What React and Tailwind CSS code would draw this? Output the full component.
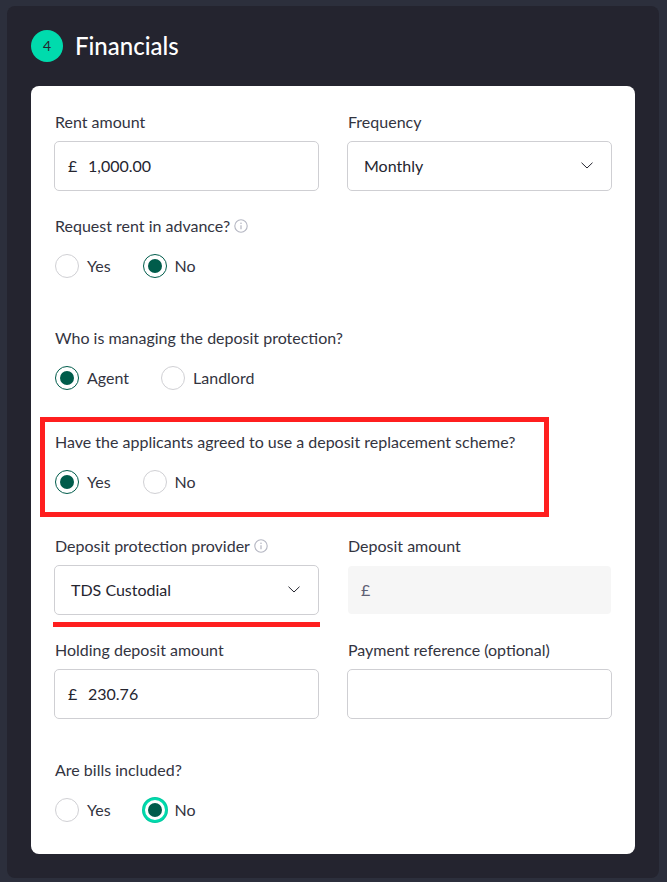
import React from "react";

function Info() {
  return (
    <svg width="14" height="14" viewBox="0 0 14 14" fill="none" className="shrink-0">
      <circle cx="7" cy="7" r="6.2" stroke="#b4b6c2" strokeWidth="1.1" />
      <circle cx="7" cy="4.2" r="0.8" fill="#b4b6c2" />
      <path d="M7 6.2V10.2" stroke="#b4b6c2" strokeWidth="1.2" />
    </svg>
  );
}

function Chevron() {
  return (
    <svg width="12" height="7" viewBox="0 0 12 7" fill="none" className="shrink-0">
      <path d="M0.5 0.7L6 6L11.5 0.7" stroke="#25252f" strokeWidth="1" />
    </svg>
  );
}

function Label({ children, info }) {
  return (
    <div className="flex h-5 items-center gap-1 pl-px text-base leading-5 text-[#33343f]">
      <span>{children}</span>
      {info && <Info />}
    </div>
  );
}

function Radio({ label, checked, focus }) {
  return (
    <div className="flex h-6 items-center gap-2">
      <span
        className={
          "flex h-6 w-6 items-center justify-center rounded-full bg-white " +
          (checked
            ? focus
              ? "border-2 border-[#00dbad] ring-1 ring-[#00c9a0]"
              : "border border-[#005c4b]"
            : "border border-[#d0d0d4]")
        }
      >
        {checked && <span className="h-[14px] w-[14px] rounded-full bg-[#005c4b]" />}
      </span>
      <span className="pb-px text-base leading-5 text-[#33343f]">{label}</span>
    </div>
  );
}

function Radios({ children }) {
  return <div className="mt-[18px] flex gap-8 pl-px">{children}</div>;
}

function Money({ value }) {
  return (
    <div className="mt-[9px] flex h-[50px] items-center rounded-[5px] border border-[#cfcfd3] bg-white pb-px pl-[13px] text-base text-[#25252f]">
      <span className="w-5">£</span>
      <span>{value}</span>
    </div>
  );
}

function Select({ value }) {
  return (
    <div className="mt-[9px] flex h-[50px] items-center justify-between rounded-[5px] border border-[#cfcfd3] bg-white pb-px pl-4 pr-[18px] text-base text-[#25252f]">
      <span>{value}</span>
      <Chevron />
    </div>
  );
}

export default function App() {
  return (
    <div
      className="h-[882px] w-[667px] overflow-hidden bg-[#2c2f3c] pl-[7px] pr-2 pt-[6px]"
      style={{ fontFamily: '"Lato", "Open Sans", sans-serif' }}
    >
      <div className="h-[872px] rounded-lg bg-[#24242f] p-6">
        <div className="flex h-8 items-center gap-3">
          <span className="flex h-8 w-8 items-center justify-center rounded-full bg-[#00dbad] text-sm text-[#25252f]">
            4
          </span>
          <h2 className="text-2xl font-medium leading-8 text-white">Financials</h2>
        </div>
        <div className="relative mt-6 h-[768px] rounded-lg bg-white px-[23px] pt-[26px]">
          <div className="grid grid-cols-2 gap-x-7">
            <div>
              <Label>Rent amount</Label>
              <Money value="1,000.00" />
            </div>
            <div>
              <Label>Frequency</Label>
              <Select value="Monthly" />
            </div>
          </div>

          <div className="mt-[25px]">
            <Label info>Request rent in advance?</Label>
            <Radios>
              <Radio label="Yes" />
              <Radio label="No" checked />
            </Radios>
          </div>

          <div className="mt-[50px]">
            <Label>Who is managing the deposit protection?</Label>
            <Radios>
              <Radio label="Agent" checked />
              <Radio label="Landlord" />
            </Radios>
          </div>

          <div className="mt-[42px]">
            <Label>Have the applicants agreed to use a deposit replacement scheme?</Label>
            <Radios>
              <Radio label="Yes" checked />
              <Radio label="No" />
            </Radios>
          </div>

          <div className="mt-[42px] grid grid-cols-2 gap-x-7">
            <div>
              <Label info>Deposit protection provider</Label>
              <Select value="TDS Custodial" />
            </div>
            <div>
              <Label>Deposit amount</Label>
              <div className="mt-[9px] flex h-[50px] items-center rounded-[5px] border border-transparent bg-[#f6f6f6] bg-clip-padding pb-px pl-[13px] text-base text-[#5f6074]">
                £
              </div>
            </div>
          </div>

          <div className="mt-[25px] grid grid-cols-2 gap-x-7">
            <div>
              <Label>Holding deposit amount</Label>
              <Money value="230.76" />
            </div>
            <div>
              <Label>Payment reference (optional)</Label>
              <div className="mt-[9px] h-[50px] rounded-[5px] border border-[#cfcfd3] bg-white" />
            </div>
          </div>

          <div className="mt-[41px]">
            <Label>Are bills included?</Label>
            <Radios>
              <Radio label="Yes" />
              <Radio label="No" checked focus />
            </Radios>
          </div>

          <div className="absolute left-[9px] top-[331px] h-[100px] w-[509px] border-[5px] border-[#ff1f1f]" />
          <div className="absolute left-[22px] top-[536px] h-[5px] w-[267px] bg-[#ff1f1f]" />
        </div>
      </div>
    </div>
  );
}
